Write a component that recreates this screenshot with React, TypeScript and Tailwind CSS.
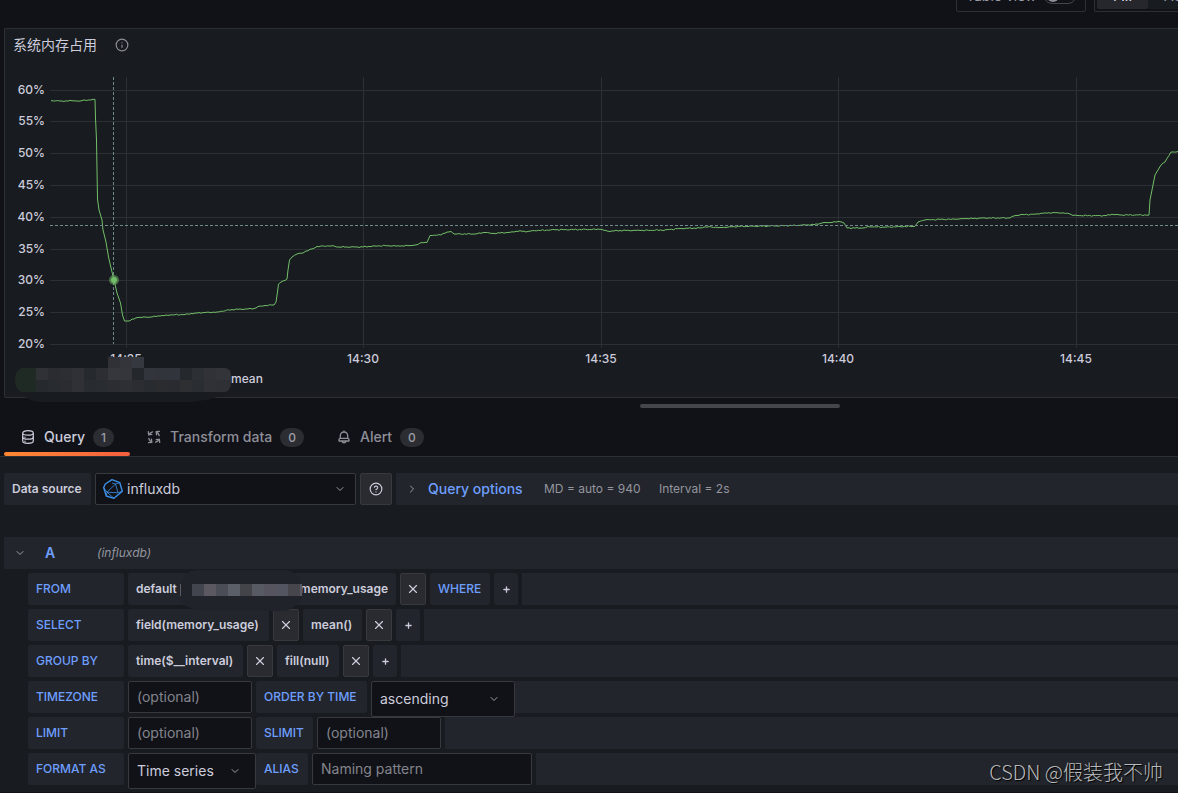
import { useState, type ReactNode } from "react";
import { ChevronDown, ChevronRight, CircleHelp, Info, Plus, X } from "lucide-react";

const yTicks = [60, 55, 50, 45, 40, 35, 30, 25, 20];

const xTicks = [
  { x: 126, label: "14:25" },
  { x: 363, label: "14:30" },
  { x: 601, label: "14:35" },
  { x: 838, label: "14:40" },
  { x: 1076, label: "14:45" },
];

const series: [number, number][] = [
  [51, 100.5], [62, 101], [72, 100.7], [80, 101], [84, 99.9], [91, 100], [92, 99.4], [95, 99.4], [95.5, 118], [96.5, 140],
  [97, 170], [97.5, 199], [99, 210], [102, 220], [103, 230], [106, 242], [108.5, 257], [112, 272], [114, 280],
  [117, 293], [120.5, 303], [122.5, 315], [124.5, 321], [128, 321], [134, 319], [138, 317.5], [150, 317],
  [160, 316], [170, 315], [185, 314.5], [195, 313], [217, 312], [232, 309.5], [248, 309], [254, 308.5],
  [258, 306.5], [265, 305.5], [274, 305], [276, 302], [277.5, 292], [278.5, 284], [281, 282], [287, 279],
  [288, 270], [289.5, 260], [292, 257], [297, 254], [303, 253], [306, 251], [312, 249], [317, 246.5],
  [332, 245.7], [339, 247], [363, 247], [375, 246], [388, 245.7], [400, 246.2], [416, 245], [421, 242.5],
  [427, 242.5], [430, 235.5], [441, 235], [443, 233.5], [451, 231.5], [454, 234], [475, 234], [485, 232.5],
  [492, 233.5], [510, 232.3], [520, 230.7], [526, 232], [532, 230.7], [555, 229.8], [600, 229.3],
  [608, 231.3], [620, 230.5], [640, 230.5], [665, 230], [680, 228.5], [700, 228], [705, 226.8], [720, 227.5],
  [740, 226.4], [770, 226], [800, 225.3], [818, 224.3], [822, 223], [840, 221.7], [844, 223], [847, 228],
  [863, 228], [870, 226.8], [885, 227.2], [900, 226.6], [915, 226.3], [918, 222], [925, 220], [940, 219.4],
  [955, 219.3], [965, 218.7], [985, 218], [1010, 218], [1014, 216], [1020, 214.8], [1035, 214.2],
  [1045, 212.8], [1063, 212.8], [1070, 214], [1073, 215.5], [1106, 215.7], [1112, 214.2], [1120, 215],
  [1149, 215], [1150, 200], [1153, 185], [1155, 175], [1158, 170], [1161, 165], [1165, 162], [1171, 152],
  [1178, 151.5],
];

// fills long flat stretches with small sample noise
function linePath(points: [number, number][]) {
  const out = [`M${points[0][0]} ${points[0][1]}`];
  for (let i = 1; i < points.length; i++) {
    const [x0, y0] = points[i - 1];
    const [x1, y1] = points[i];
    const n = Math.floor((x1 - x0) / 2);
    for (let k = 1; k < n; k++) {
      const x = x0 + ((x1 - x0) * k) / n;
      const noise = Math.sin(x * 1.7) * 0.4 + Math.sin(x * 0.6) * 0.25;
      out.push(`L${x.toFixed(1)} ${(y0 + ((y1 - y0) * k) / n + noise).toFixed(1)}`);
    }
    out.push(`L${x1} ${y1}`);
  }
  return out.join(" ");
}

function Chart() {
  return (
    <svg viewBox="5 61 1173 300" className="block w-full shrink-0 overflow-visible" role="img" aria-label="系统内存占用">
      <g stroke="#2c2f33" strokeWidth="1">
        {yTicks.map((t, i) => {
          const y = Math.floor(90 + i * 31.8) + 0.5;
          return <line key={t} x1="50" x2="1178" y1={y} y2={y} />;
        })}
        {xTicks.map((t) => (
          <line key={t.x} x1={t.x + 0.5} x2={t.x + 0.5} y1="77" y2="348" />
        ))}
      </g>
      <g fill="#ccccdc" fontSize="12" fontWeight="500" className="font-['Inter',sans-serif]">
        {yTicks.map((t, i) => (
          <text key={t} x="45" y={Math.floor(90 + i * 31.8) + 4} textAnchor="end">
            {t}%
          </text>
        ))}
        {xTicks.map((t) => (
          <text key={t.x} x={t.x} y="363" textAnchor="middle">
            {t.label}
          </text>
        ))}
      </g>
      <path d={linePath(series)} fill="none" stroke="#73bf69" strokeWidth="1" />
      <g stroke="#708a8c" strokeWidth="1" strokeDasharray="3 2">
        <line x1="113.5" x2="113.5" y1="77" y2="344" />
        <line x1="50" x2="1178" y1="225.5" y2="225.5" />
      </g>
      <circle cx="114" cy="280" r="5" fill="#73bf69" fillOpacity="0.5" />
      <circle cx="114" cy="280" r="3" fill="#73bf69" />
    </svg>
  );
}

const legendTop = ["#303136", "#2a2c31", "#2c2e33", "#303136", "#26292e", "#2d2e33", "#36373c", "#35363b", "#24272c", "#33353d", "#31343b", "#31343a", "#25282c", "#2c2f34", "#303237", "#33343a"];
const legendBottom = ["#26292d", "#282b2f", "#2a2c31", "#303136", "#282b30", "#292c30", "#2b2d32", "#2d2f34", "#2b2d32", "#282b30", "#2a2c30", "#292b30", "#2d2f33", "#2a2d31", "#303136", "#2f3036"];
const sourceMask = ["#42454e", "#5b5862", "#4a4d56", "#5b5f67", "#424449", "#575963", "#55545f", "#535661", "#48464d", "#585b66"];

function LegendMask() {
  return (
    <svg viewBox="0 0 220 48" className="pointer-events-none absolute -top-1 left-2 h-12 w-[220px]" aria-hidden="true">
      <path d="M6 24h205v10c-6 8-16 9-34 11H28C14 44 8 38 6 30z" fill="#181b1f" />
      <clipPath id="legend-clip">
        <path d="M94 0h37v11h81q6 1 6 7v9q-1 7-6 8H9Q2 33 2 23T9 11h85z" />
      </clipPath>
      <g clipPath="url(#legend-clip)">
        <path d="M0 11h23v24H0z" fill="#202a24" />
        {legendTop.map((c, i) => (
          <rect key={i} x={23 + i * 12} y="11" width="15" height="12" fill={c} />
        ))}
        {legendBottom.map((c, i) => (
          <rect key={i} x={23 + i * 12} y="23" width="15" height="12" fill={c} />
        ))}
        <path d="M95 0h12v11H95z" fill="#303137" />
        <path d="M107 0h12v11h-12z" fill="#34353b" />
        <path d="M119 0h12v11h-12z" fill="#36383f" />
      </g>
    </svg>
  );
}

function DatabaseIcon() {
  return (
    <svg viewBox="0 0 16 16" className="size-4" fill="none" stroke="currentColor" strokeWidth="1.2" strokeLinecap="round" aria-hidden="true">
      <path d="M2.7 4C2.7 2.600 5 1.700 8 1.700S13.300 2.600 13.300 4 11 6.200 8 6.200 2.700 5.400 2.700 4zM2.700 4v8c0 1.400 2.300 2.300 5.300 2.300s5.300-.9 5.300-2.300V4" />
      <path d="M2.700 7.900c0 1.400 2.300 2.300 5.300 2.300s5.300-.9 5.300-2.300" />
      <path d="M5 8.200v.1M5 12.200v.1" strokeWidth="1.400" />
    </svg>
  );
}

function TransformIcon() {
  return (
    <svg viewBox="0 0 16 16" className="size-4" fill="none" stroke="currentColor" strokeWidth="1.3" strokeLinecap="round" strokeLinejoin="round" aria-hidden="true">
      <path d="M6.500 2.800A5.500 5.500 0 0 0 2.900 5.800M2.300 2.600l.4 3.300 3.100-.5" />
      <path d="M2.800 9.500a5.500 5.500 0 0 0 3 3.600M2.600 13.700l3.300-.4-.5-3.100" />
      <path d="M9.500 13.200a5.500 5.500 0 0 0 3.600-3M13.700 13.400l-.4-3.300-3.100.5" />
      <path d="M13.200 6.500a5.500 5.500 0 0 0-3-3.600M13.400 2.300l-3.300.4.5 3.100" />
    </svg>
  );
}

function BellIcon() {
  return (
    <svg viewBox="0 0 16 16" className="size-4" fill="none" stroke="currentColor" strokeWidth="1.3" strokeLinejoin="round" aria-hidden="true">
      <path d="M8 1.500V3M4.300 9.300V6.700a3.700 3.700 0 0 1 7.400 0v2.600M3 12v-1.400c0-.8.600-1.300 1.300-1.300h7.400c.7 0 1.300.5 1.300 1.300V12zM6 12.300c.4 2 3.600 2 4 0" />
    </svg>
  );
}

function InfluxLogo() {
  return (
    <svg viewBox="0 0 22 22" className="size-[22px]" fill="none" stroke="#3d8fe6" strokeLinejoin="round" aria-hidden="true">
      <path d="M10 1.700 17.800 4.700 20.300 13.200 12 20.300 4.300 18 1.700 9.500 3.300 6z" strokeWidth="1.400" />
      <path d="M17.800 4.700 13.500 6 5 14.200 16 14.800 13.500 6 10 5M1.700 9.500 5 14.200l-.7 3.800M5 14.200l7 6.100M16 14.800l4.300-1.600" strokeWidth="0.800" />
    </svg>
  );
}

function Tab({ icon, label, count, active }: { icon: ReactNode; label: string; count: number; active?: boolean }) {
  return (
    <button
      type="button"
      role="tab"
      aria-selected={!!active}
      className={`relative flex h-full items-center gap-2 px-4 text-sm font-medium ${active ? "text-[#ccccdc]" : "text-[#8e8f99]"}`}
    >
      {icon}
      {label}
      <span className="rounded-full bg-[#2c2d32] px-2 text-xs leading-[19px] text-[#9c9da8]">{count}</span>
      {active && <span className="absolute inset-x-0 bottom-0 h-1 rounded-xs bg-linear-to-r from-[#ff8833] to-[#f55f3e]" />}
    </button>
  );
}

function Key({ children, width = "w-24", htmlFor }: { children: ReactNode; width?: string; htmlFor?: string }) {
  return (
    <label
      htmlFor={htmlFor}
      className={`mr-1 flex h-8 shrink-0 items-center rounded-xs bg-[#22252b] px-2 text-xs font-medium whitespace-nowrap text-[#6e9fff] ${width}`}
    >
      {children}
    </label>
  );
}

function Segment({ children, width }: { children: ReactNode; width: string }) {
  return (
    <button
      type="button"
      className={`mr-1 flex h-8 shrink-0 items-center justify-between rounded-xs bg-[#22252b] px-2 text-xs font-semibold whitespace-nowrap text-[#ccccdc] ${width}`}
    >
      {children}
    </button>
  );
}

function Remove() {
  return (
    <button
      type="button"
      aria-label="remove"
      className="mr-1 flex h-8 w-[26px] shrink-0 items-center justify-center rounded-xs border border-[#38393e] bg-[#2a2b30] text-[#ccccdc]"
    >
      <X size={14} strokeWidth={2} />
    </button>
  );
}

function Add() {
  return (
    <button
      type="button"
      aria-label="add"
      className="mr-1 flex h-8 w-6 shrink-0 items-center justify-center rounded-xs bg-[#22252b] text-[#ccccdc]"
    >
      <Plus size={9} strokeWidth={3.5} />
    </button>
  );
}

function Fill() {
  return <div className="h-8 min-w-0 flex-1 bg-[#22252b]" />;
}

function TextBox({ id, placeholder, width }: { id: string; placeholder: string; width: string }) {
  return (
    <input
      id={id}
      placeholder={placeholder}
      className={`mr-1 h-8 shrink-0 rounded-xs border border-[#38393e] bg-[#111217] px-2 pb-0.5 text-sm text-[#ccccdc] placeholder:text-[#83848d] ${width}`}
    />
  );
}

function SelectBox({ id, options, width }: { id: string; options: string[]; width: string }) {
  const [value, setValue] = useState(options[0]);
  return (
    <div className={`relative z-10 h-9 shrink-0 ${width}`}>
      <select
        id={id}
        value={value}
        onChange={(e) => setValue(e.target.value)}
        className="size-full appearance-none rounded-xs border border-[#38393e] bg-[#111217] px-2 text-sm text-[#ccccdc]"
      >
        {options.map((o) => (
          <option key={o}>{o}</option>
        ))}
      </select>
      <ChevronDown size={12} className="pointer-events-none absolute top-3 right-[15px] text-[#9c9da8]" />
    </div>
  );
}

function Row({ children }: { children: ReactNode }) {
  return <div className="flex h-8 items-start">{children}</div>;
}

export default function App() {
  return (
    <div className="relative min-h-screen overflow-hidden bg-[#111217] font-['Inter','Noto_Sans_CJK_SC',sans-serif] text-[#ccccdc]">
      <header className="flex h-7 items-start overflow-hidden">
        <div className="flex h-3 flex-1 items-end justify-end gap-2">
          <label className="flex h-8 w-[130px] items-center justify-between rounded-xs border border-[#2e2f35] px-[9px] text-sm text-[#9c9da8]">
            Table view
            <input type="checkbox" className="peer sr-only" />
            <span className="flex h-4 w-8 items-center rounded-full border border-[#45464c] px-0.5">
              <span className="size-3 rounded-full bg-[#8e8f99]" />
            </span>
          </label>
          <div className="flex h-8 w-[84px] items-center overflow-hidden rounded-l-xs border border-r-0 border-[#2e2f35] p-0.5 text-sm">
            <button type="button" className="h-[26px] w-[51px] shrink-0 rounded-xs bg-[#26272c] font-medium">Fill</button>
            <button type="button" className="h-[26px] shrink-0 bg-[#181b1f] px-4 text-[#9c9da8]">Actual</button>
          </div>
        </div>
      </header>

      <section className="ml-1 flex flex-col rounded-l-xs border border-r-0 border-[#2c2f34] bg-[#181b1f]">
        <div className="flex h-8 items-center gap-[18px] px-2">
          <h2 className="text-sm font-normal">系统内存占用</h2>
          <Info size={14} className="text-[#8e8f99]" />
        </div>
        <Chart />
        <div className="relative flex h-9 items-center pl-[226px] text-xs font-medium">
          <LegendMask />
          mean
        </div>
      </section>

      <div className="flex h-5 justify-center pt-1.5 pl-[302px]">
        <div className="h-1 w-[200px] rounded-full bg-[#45464b]" />
      </div>

      <nav role="tablist" className="flex h-[39px] border-b border-[#2c2f34] pl-1">
        <Tab icon={<DatabaseIcon />} label="Query" count={1} active />
        <Tab icon={<TransformIcon />} label="Transform data" count={0} />
        <Tab icon={<BellIcon />} label="Alert" count={0} />
      </nav>

      <main className="bg-[#181b1f] pt-4 pb-[7px] pl-1">
        <div className="flex h-8 gap-1">
          <label htmlFor="datasource" className="flex w-[87px] shrink-0 items-center rounded-xs bg-[#22252b] px-2 text-xs font-semibold whitespace-nowrap">
            Data source
          </label>
          <div className="relative w-[261px] shrink-0">
            <select
              id="datasource"
              className="size-full appearance-none rounded-xs border border-[#38393e] bg-[#111217] pl-[31px] text-sm text-[#ccccdc]"
            >
              <option>influxdb</option>
            </select>
            <span className="pointer-events-none absolute top-[5px] left-[7px]">
              <InfluxLogo />
            </span>
            <ChevronDown size={12} className="pointer-events-none absolute top-2.5 right-2.5 text-[#9c9da8]" />
          </div>
          <button
            type="button"
            aria-label="Data source help"
            className="flex w-8 shrink-0 items-center justify-center rounded-xs border border-[#38393e] bg-[#2a2b30]"
          >
            <CircleHelp size={14} />
          </button>
          <div className="flex min-w-0 flex-1 items-center bg-[#22252b] pl-2.5 whitespace-nowrap">
            <ChevronRight size={12} className="text-[#9c9da8]" />
            <button type="button" className="ml-2.5 w-[96px] text-left text-sm font-medium text-[#6e9fff]">
              Query options
            </button>
            <span className="ml-5 w-[99px] text-xs text-[#94959f]">MD = auto = 940</span>
            <span className="ml-4 text-xs text-[#94959f]">Interval = 2s</span>
          </div>
        </div>

        <div className="mt-8 flex h-8 items-center bg-[#22252b] pl-2.5">
          <ChevronDown size={12} className="text-[#9c9da8]" />
          <span className="ml-[19px] w-[52px] text-sm font-semibold text-[#6e9fff]">A</span>
          <em className="text-xs text-[#94959f]">(influxdb)</em>
        </div>

        <div className="mt-1 flex flex-col gap-1 pl-6">
          <Row>
            <Key>FROM</Key>
            <div className="relative">
              <Segment width="w-[268px]">
                <span>default</span>
                <span>memory_usage</span>
              </Segment>
              <svg viewBox="0 0 124 44" className="pointer-events-none absolute -top-1 left-[50px] h-11 w-[124px]" aria-hidden="true">
                <path d="M12 2Q22 0 40 1h68q15 4 16 15v14q-8 10-17 12H30Q2 40 2 28 0 10 12 2z" fill="#202329" />
                <path d="M2 15h1v12H2z" fill="#5a5b63" />
                {sourceMask.map((c, i) => (
                  <rect key={i} x={14 + i * 12} y="15" width={i === 9 ? 2 : 12} height="12" fill={c} />
                ))}
              </svg>
            </div>
            <Remove />
            <Key width="w-[60px]">WHERE</Key>
            <Add />
            <Fill />
          </Row>
          <Row>
            <Key>SELECT</Key>
            <Segment width="w-[141px]">field(memory_usage)</Segment>
            <Remove />
            <Segment width="w-[59px]">mean()</Segment>
            <Remove />
            <Add />
            <Fill />
          </Row>
          <Row>
            <Key>GROUP BY</Key>
            <Segment width="w-[115px]">time($__interval)</Segment>
            <Remove />
            <Segment width="w-[62px]">fill(null)</Segment>
            <Remove />
            <Add />
            <Fill />
          </Row>
          <Row>
            <Key htmlFor="timezone">TIMEZONE</Key>
            <TextBox id="timezone" placeholder="(optional)" width="w-[124px]" />
            <Key htmlFor="order" width="w-[111px]">ORDER BY TIME</Key>
            <SelectBox id="order" options={["ascending", "descending"]} width="w-[144px]" />
            <Fill />
          </Row>
          <Row>
            <Key htmlFor="limit">LIMIT</Key>
            <TextBox id="limit" placeholder="(optional)" width="w-[124px]" />
            <Key htmlFor="slimit" width="w-[57px]">SLIMIT</Key>
            <TextBox id="slimit" placeholder="(optional)" width="w-[124px]" />
            <Fill />
          </Row>
          <Row>
            <Key htmlFor="format">FORMAT AS</Key>
            <SelectBox id="format" options={["Time series", "Table", "Logs"]} width="w-[128px]" />
            <Key htmlFor="alias" width="w-[52px]">ALIAS</Key>
            <TextBox id="alias" placeholder="Naming pattern" width="w-[220px]" />
            <Fill />
          </Row>
        </div>
      </main>

      <p className="absolute right-[15px] bottom-1.5 z-20 font-['Noto_Sans_CJK_SC',sans-serif] text-[20px] leading-[30px] font-light text-[#b9babc] [text-shadow:1px_1px_1px_#000]">
        CSDN @假装我不帅
      </p>
    </div>
  );
}
